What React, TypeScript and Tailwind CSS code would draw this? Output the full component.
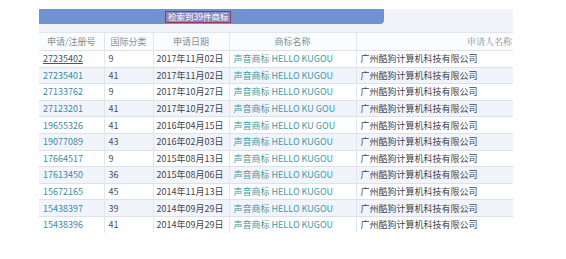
const rows: [string, string, string, string][] = [
  ["27235402", "9", "2017年11月02日", "声音商标 HELLO KUGOU"],
  ["27235401", "41", "2017年11月02日", "声音商标 HELLO KUGOU"],
  ["27133762", "9", "2017年10月27日", "声音商标 HELLO KUGOU"],
  ["27123201", "41", "2017年10月27日", "声音商标 HELLO KU GOU"],
  ["19655326", "41", "2016年04月15日", "声音商标 HELLO KU GOU"],
  ["19077089", "43", "2016年02月03日", "声音商标 HELLO KUGOU"],
  ["17664517", "9", "2015年08月13日", "声音商标 HELLO KUGOU"],
  ["17613450", "36", "2015年08月06日", "声音商标 HELLO KUGOU"],
  ["15672165", "45", "2014年11月13日", "声音商标 HELLO KUGOU"],
  ["15438397", "39", "2014年09月29日", "声音商标 HELLO KUGOU"],
  ["15438396", "41", "2014年09月29日", "声音商标 HELLO KUGOU"],
];

const font = "font-['Noto_Sans_CJK_SC','Liberation_Sans',sans-serif]";

export default function App() {
  return (
    <div className={`h-[259px] w-[566px] overflow-hidden bg-white pt-[9px] ${font}`}>
      <div className="ml-[39px] w-[474px]">
        {/* result banner */}
        <div className="h-[23px] bg-[#f1f4f8]">
          <div className="flex h-[15px] w-[345px] items-center rounded-br-sm bg-[#6f92d2] pl-[126px]">
            <span className="flex h-[12px] items-center whitespace-nowrap border border-[#8c3d5c] bg-[#8d87c0] px-[2px] text-[8.5px] leading-none text-white">
              检索到39件商标
            </span>
          </div>
        </div>

        <table className="w-[474px] table-fixed border-collapse whitespace-nowrap text-[9px] leading-none">
          <colgroup>
            <col className="w-[65px]" />
            <col className="w-[49px]" />
            <col className="w-[76px]" />
            <col className="w-[127px]" />
            <col className="w-[157px]" />
          </colgroup>
          <thead>
            <tr className="h-[18px] border-t border-[#e2e6ea] bg-[#fbfcfd] text-[#8a8f94]">
              <th className="border-r border-[#e2e6ea] text-center font-normal">申请/注册号</th>
              <th className="border-r border-[#e2e6ea] text-center font-normal">国际分类</th>
              <th className="border-r border-[#e2e6ea] text-center font-normal">申请日期</th>
              <th className="border-r border-[#e2e6ea] text-center font-normal">商标名称</th>
              <th className="pr-[1px] text-right font-['Noto_Serif_CJK_SC','Noto_Sans_CJK_SC',serif] font-normal">
                申请人名称
              </th>
            </tr>
          </thead>
          <tbody>
            {rows.map(([no, cls, date, name], i) => (
              <tr
                key={no}
                className={`h-[16.6px] border-t border-[#dde2e8] ${i % 2 === 1 ? "bg-[#f1f5fb]" : "bg-white"}`}
              >
                <td className="border-r border-[#e2e6ea] pl-[4px]">
                  {i === 0 ? (
                    <span className="text-[#3b5870] underline underline-offset-1">{no}</span>
                  ) : (
                    <span className="text-[#3f8aa6]">{no}</span>
                  )}
                </td>
                <td className="border-r border-[#e2e6ea] pl-[4px] text-[#4a4f55]">{cls}</td>
                <td className="border-r border-[#e2e6ea] pl-[3px] text-[#3f454b]">{date}</td>
                <td className="border-r border-[#e2e6ea] pl-[4px] text-[#3c9aa4]">{name}</td>
                <td className="pl-[4px] text-[#3f454b]">广州酷狗计算机科技有限公司</td>
              </tr>
            ))}
          </tbody>
        </table>
      </div>
    </div>
  );
}
